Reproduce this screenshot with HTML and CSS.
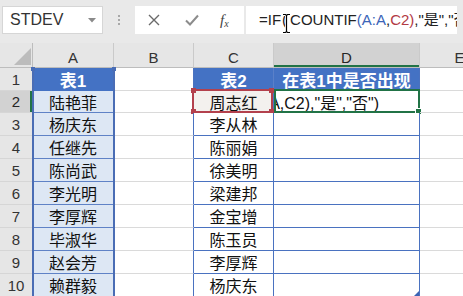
FILE: index.html
```html
<!DOCTYPE html>
<html>
<head>
<meta charset="utf-8">
<link rel="stylesheet" href="styles.css">
</head>
<body>
<div class="app">
  <div class="fbar">
    <div class="namebox">
      <span>STDEV</span>
      <svg class="dd" width="8" height="5" viewBox="0 0 8 5"><path d="M0 0H8L4 4.5Z" fill="#8a8a8a"/></svg>
    </div>
    <div class="grip"><i></i><i></i><i></i></div>
    <div class="btns">
      <svg class="bx" width="12" height="12" viewBox="0 0 12 12"><path d="M1 1L11 11M11 1L1 11" stroke="#6a6a6a" stroke-width="1.4" fill="none"/></svg>
      <svg class="bv" width="14" height="12" viewBox="0 0 14 12"><path d="M1 6.5L5 10.5L13 1.5" stroke="#8c8c8c" stroke-width="2" fill="none"/></svg>
      <span class="fx">f<sub>x</sub></span>
    </div>
    <div class="formula"><span>=IF</span><span class="par">(</span><span>COUNTIF</span><span class="blue">(A:A</span><span>,</span><span class="red">C2)</span><span>,"是","否")</span></div>
    <svg class="ibeam" width="9" height="21" viewBox="0 0 9 21"><path d="M1 1.5H3.5L4.5 2.5L5.5 1.5H8M4.5 2.5V18.5M1 19.5H3.5L4.5 18.5L5.5 19.5H8" stroke="#fff" stroke-width="3" fill="none"/><path d="M1 1.5H3.5L4.5 2.5L5.5 1.5H8M4.5 2.5V18.5M1 19.5H3.5L4.5 18.5L5.5 19.5H8" stroke="#000" stroke-width="1.2" fill="none"/></svg>
  </div>

  <div class="sheet">
    <!-- header row -->
    <div class="ch corner"><span class="tri"></span></div>
    <div class="ch">A</div>
    <div class="ch">B</div>
    <div class="ch">C</div>
    <div class="ch sel-col">D</div>
    <div class="ch">E</div>

    <!-- row 1 -->
    <div class="rh">1</div>
    <div class="c t1h">表1</div>
    <div class="c b"></div>
    <div class="c t2h">表2</div>
    <div class="c t2h dcol">在表1中是否出现</div>
    <div class="c"></div>

    <!-- row 2 -->
    <div class="rh sel-row">2</div>
    <div class="c t1">陆艳菲</div>
    <div class="c b"></div>
    <div class="c t2 c2">周志红
      <div class="refc"><i class="h tl"></i><i class="h tr"></i><i class="h bl"></i><i class="h br"></i></div>
    </div>
    <div class="c t2 dcol d2">
      <div class="edit"><span class="etxt">=IF(COUNTIF(A:A,C2),"是","否")</span></div>
      <div class="active"><i class="fill"></i></div>
    </div>
    <div class="c"></div>

    <!-- row 3 -->
    <div class="rh">3</div>
    <div class="c t1">杨庆东</div>
    <div class="c b"></div>
    <div class="c t2">李从林</div>
    <div class="c t2 dcol"></div>
    <div class="c"></div>

    <!-- row 4 -->
    <div class="rh">4</div>
    <div class="c t1">任继先</div>
    <div class="c b"></div>
    <div class="c t2">陈丽娟</div>
    <div class="c t2 dcol"></div>
    <div class="c"></div>

    <!-- row 5 -->
    <div class="rh">5</div>
    <div class="c t1">陈尚武</div>
    <div class="c b"></div>
    <div class="c t2">徐美明</div>
    <div class="c t2 dcol"></div>
    <div class="c"></div>

    <!-- row 6 -->
    <div class="rh">6</div>
    <div class="c t1">李光明</div>
    <div class="c b"></div>
    <div class="c t2">梁建邦</div>
    <div class="c t2 dcol"></div>
    <div class="c"></div>

    <!-- row 7 -->
    <div class="rh">7</div>
    <div class="c t1">李厚辉</div>
    <div class="c b"></div>
    <div class="c t2">金宝增</div>
    <div class="c t2 dcol"></div>
    <div class="c"></div>

    <!-- row 8 -->
    <div class="rh">8</div>
    <div class="c t1">毕淑华</div>
    <div class="c b"></div>
    <div class="c t2">陈玉员</div>
    <div class="c t2 dcol"></div>
    <div class="c"></div>

    <!-- row 9 -->
    <div class="rh">9</div>
    <div class="c t1">赵会芳</div>
    <div class="c b"></div>
    <div class="c t2">李厚辉</div>
    <div class="c t2 dcol"></div>
    <div class="c"></div>

    <!-- row 10 -->
    <div class="rh">10</div>
    <div class="c t1">赖群毅</div>
    <div class="c b"></div>
    <div class="c t2">杨庆东</div>
    <div class="c t2 dcol d10"><i class="resize"></i></div>
    <div class="c"></div>

    <div class="refa"><i class="ha l"></i><i class="ha r"></i></div>
  </div>
</div>
</body>
</html>
```

FILE: styles.css
```css
html, body {
  margin: 0;
  padding: 0;
}
body {
  width: 463px;
  height: 296px;
  overflow: hidden;
  background: #e9e9e9;
  font-family: "Liberation Sans", "Noto Sans CJK SC", sans-serif;
  color: #000;
}
.app {
  width: 463px;
  height: 296px;
  overflow: hidden;
}

/* formula bar */
.fbar {
  position: relative;
  display: flex;
  height: 43px;
  padding-top: 6px;
  box-sizing: border-box;
  background: #e9e9e9;
}
.namebox {
  width: 101px;
  height: 28px;
  margin-left: 2px;
  background: #fff;
  border: 1px solid #d6d6d6;
  box-sizing: border-box;
  display: flex;
  align-items: center;
  padding-left: 7px;
  padding-right: 6px;
  font-size: 16px;
  color: #333;
}
.namebox .dd {
  margin-left: auto;
}
.grip {
  width: 32px;
  height: 28px;
  display: flex;
  flex-direction: column;
  align-items: center;
  justify-content: center;
  gap: 2px;
}
.grip i {
  display: block;
  width: 2px;
  height: 2px;
  background: #a8a8a8;
}
.btns {
  width: 109px;
  height: 28px;
  background: #fff;
  display: flex;
  align-items: center;
  box-sizing: border-box;
  padding-left: 13px;
}
.bv {
  margin-left: 25px;
}
.fx {
  margin-left: 21px;
  font-family: "Liberation Serif", serif;
  font-style: italic;
  font-size: 15px;
  color: #444;
}
.fx sub {
  font-size: 10px;
  vertical-align: -2px;
}
.formula {
  margin-left: 2px;
  width: 211px;
  height: 28px;
  background: #fff;
  box-sizing: border-box;
  padding-left: 13px;
  font-size: 15px;
  line-height: 28px;
  white-space: nowrap;
  overflow: hidden;
  color: #222;
}
.formula .par {
  margin-right: 3px;
  margin-left: 1px;
}
.formula .blue {
  color: #3b65b8;
}
.formula .red {
  color: #b23a44;
}
.ibeam {
  position: absolute;
  left: 282px;
  top: 13px;
}

/* sheet grid */
.sheet {
  position: relative;
  display: grid;
  grid-template-columns: 33px 81px 80px 80px 146px 80px;
  grid-template-rows: 25px 23px 22px 23px 23px 23px 23px 23px 23px 23px 23px;
  background: #fff;
}
.ch {
  background: #e6e6e6;
  border-right: 1px solid #cacaca;
  border-bottom: 1px solid #bdbdbd;
  box-sizing: border-box;
  display: flex;
  align-items: center;
  justify-content: center;
  padding-top: 4px;
  font-size: 15px;
  color: #333;
}
.corner {
  justify-content: flex-end;
  align-items: flex-end;
  padding: 0 1px 2px 0;
  border-right-color: #bdbdbd;
}
.tri {
  display: block;
  width: 0;
  height: 0;
  border-left: 17px solid transparent;
  border-bottom: 17px solid #bcbcbc;
}
.sel-col {
  background: #d2d2d2;
  box-shadow: inset 0 -2px 0 #217346;
  color: #262626;
}
.rh {
  background: #e6e6e6;
  border-right: 1px solid #bdbdbd;
  border-bottom: 1px solid #d6d6d6;
  box-sizing: border-box;
  display: flex;
  align-items: center;
  justify-content: center;
  font-size: 15px;
  color: #333;
}
.sel-row {
  background: #d2d2d2;
  box-shadow: inset -2px 0 0 #217346;
  color: #262626;
}
.c {
  position: relative;
  border-right: 1px solid #dadada;
  border-bottom: 1px solid #dadada;
  box-sizing: border-box;
  display: flex;
  align-items: center;
  justify-content: center;
  font-size: 16px;
  color: #111;
  white-space: nowrap;
}
.b {
  border-right-color: #4a72c0;
}
.t1h {
  background: #4472c4;
  color: #fff;
  font-weight: bold;
  font-size: 17px;
  border-bottom-color: #4472c4;
}
.t1 {
  background: #dde7f4;
  border-bottom-color: #5f82c6;
}
.t2h {
  background: #4472c4;
  color: #fff;
  font-weight: bold;
  font-size: 17px;
  border-right-color: #5a80c9;
  border-bottom-color: #4472c4;
}
.t2 {
  background: #fff;
  border-right-color: #4a72c0;
  border-bottom-color: #4a72c0;
}
.dcol {
  border-right-color: #4a72c0;
}
.c2 {
  background: #f3f1ee;
}
.refc {
  position: absolute;
  left: -2px;
  top: -2px;
  right: 0;
  bottom: -1px;
  border: 2px solid #b3414d;
}
.h {
  position: absolute;
  width: 5px;
  height: 5px;
  background: #b3414d;
}
.h.tl { left: -3px; top: -3px; }
.h.tr { right: -3px; top: -3px; }
.h.bl { left: -3px; bottom: -3px; }
.h.br { right: -3px; bottom: -3px; }

.d2 {
  justify-content: flex-start;
}
.edit {
  width: 100%;
  height: 100%;
  display: flex;
  align-items: center;
  justify-content: flex-end;
  overflow: hidden;
  padding-right: 40px;
  box-sizing: border-box;
}
.etxt {
  flex-shrink: 0;
  white-space: nowrap;
  font-size: 16px;
  color: #111;
}
.active {
  position: absolute;
  left: 0;
  top: -2px;
  right: -1px;
  bottom: -1px;
  border: 2px solid #217346;
}
.fill {
  position: absolute;
  right: -4px;
  bottom: -4px;
  width: 5px;
  height: 5px;
  background: #217346;
  border: 1px solid #fff;
}
.resize {
  position: absolute;
  right: 0;
  bottom: 0;
  width: 0;
  height: 0;
  border-left: 5px solid transparent;
  border-bottom: 5px solid #3c64b4;
}

/* A:A reference highlight */
.refa {
  position: absolute;
  left: 32px;
  top: 25px;
  width: 83px;
  height: 240px;
  border-left: 2px solid #4a6db5;
  border-right: 2px solid #4a6db5;
  box-sizing: border-box;
  pointer-events: none;
}
.ha {
  position: absolute;
  top: -1px;
  width: 4px;
  height: 4px;
  background: #4a6db5;
}
.ha.l { left: -3px; }
.ha.r { right: -3px; }
```
